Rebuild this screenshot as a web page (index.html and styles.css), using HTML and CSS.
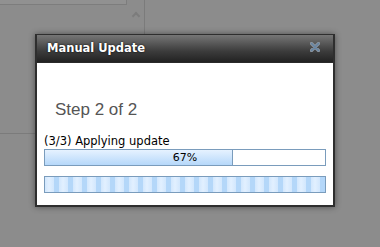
FILE: index.html
```html
<!DOCTYPE html>
<html lang="en">
<head>
  <meta charset="UTF-8" />
  <title>Manual Update</title>
  <link rel="stylesheet" href="styles.css">
</head>
<body>

  <!-- page behind the dimmed overlay -->
  <div class="backdrop">
    <div class="side-panel">
      <div class="panel-top">
        <div class="panel-strip"></div>
        <div class="scroll-col"><span class="scroll-up"></span></div>
      </div>
    </div>
  </div>

  <!-- dialog -->
  <div class="dialog">
    <div class="dialog-title">
      <span>Manual Update</span>
      <svg class="close-btn" width="10" height="10" viewBox="0 0 10 10">
        <path d="M1.5 1.5 L8.5 8.5 M8.5 1.5 L1.5 8.5" stroke="#8d96a0" stroke-width="3.2" stroke-linecap="round"/>
        <path d="M1.5 1.5 L8.5 8.5 M8.5 1.5 L1.5 8.5" stroke="#6584a3" stroke-width="1.6" stroke-linecap="round"/>
      </svg>
    </div>
    <div class="dialog-body">
      <div class="step">Step 2 of 2</div>
      <div class="status">(3/3) Applying update</div>
      <div class="progress">
        <div class="progress-fill" style="width: 67%"></div>
        <div class="progress-text">67%</div>
      </div>
      <div class="busy-bar"></div>
    </div>
  </div>

</body>
</html>
```
FILE: styles.css
```css
html, body {
  margin: 0;
  padding: 0;
  width: 100%;
  height: 100%;
  overflow: hidden;
  background-color: #8c8c8c;
  font-family: "DejaVu Sans", Verdana, sans-serif;
}

.backdrop {
  position: relative;
  height: 100%;
}

.side-panel {
  width: 145px;
  height: 134px;
  border-right: 1px solid #7b7b7b;
  border-bottom: 1px solid #7b7b7b;
  box-sizing: border-box;
}

.panel-top {
  display: flex;
  height: 34px;
}

.panel-strip {
  width: 127px;
  height: 5px;
  background-color: #919191;
  border-right: 1px solid #7d7d7d;
  border-bottom: 1px solid #7d7d7d;
  box-sizing: border-box;
}

.scroll-col {
  width: 17px;
  display: flex;
  justify-content: center;
  padding-top: 13px;
}

.scroll-up {
  width: 4px;
  height: 4px;
  border-left: 2px solid #7c7c7c;
  border-top: 2px solid #7c7c7c;
  transform: rotate(45deg);
}

.dialog {
  position: absolute;
  left: 35px;
  top: 34px;
  width: 300px;
  height: 173px;
  box-sizing: border-box;
  border: 2px solid #2e2e2e;
  border-top-width: 1px;
  background: #fff;
  box-shadow: 0 0 6px rgba(0,0,0,0.45);
}

.dialog-title {
  height: 27px;
  display: flex;
  align-items: center;
  justify-content: space-between;
  padding: 0 13px 0 10px;
  background: linear-gradient(#767676, #3c3c3c 60%, #222);
  border-bottom: 1px solid #2a2a2a;
  color: #fff;
  font-weight: bold;
  font-size: 11.5px;
  text-shadow: 0 0 2px #000;
}

.dialog-title span {
  margin-top: -2px;
}

.close-btn {
  margin-top: -4px;
}

.dialog-body {
  padding: 0 7px;
}

.step {
  margin: 37px 0 0 11px;
  font-family: "Liberation Sans", Arial, sans-serif;
  font-size: 17px;
  line-height: 20px;
  color: #555;
}

.status {
  margin-top: 14px;
  font-size: 11.5px;
  line-height: 14px;
  color: #000;
}

.progress {
  position: relative;
  height: 17px;
  margin-top: 1px;
  border: 1px solid #7a9cbc;
  box-sizing: border-box;
  background: #fff;
}

.progress-fill {
  height: 100%;
  background: linear-gradient(#e6f2ff, #b6d8fa);
  border-right: 1px solid #7a9cbc;
  box-sizing: border-box;
}

.progress-text {
  position: absolute;
  left: 0;
  right: 0;
  top: 0;
  text-align: center;
  font-size: 11px;
  line-height: 15px;
  color: #000;
}

.busy-bar {
  height: 17px;
  margin-top: 10px;
  border: 1px solid #7a9cbc;
  box-sizing: border-box;
  background:
    repeating-linear-gradient(90deg, #d2e7fd 0, #e2f0ff 4px, #d2e7fd 9px, #b4d7f9 9px, #b4d7f9 14px),
    #d8eaff;
}
```
